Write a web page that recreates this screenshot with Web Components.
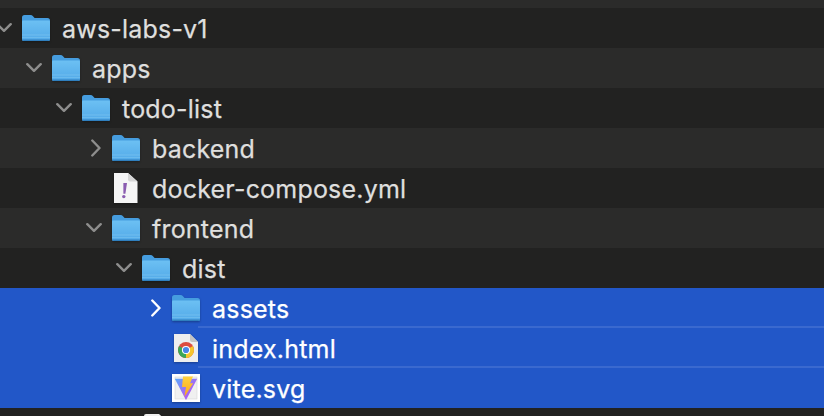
<!DOCTYPE html>
<html>
<head>
<meta charset="utf-8">
<title>Finder list</title>
<style>
  html, body { margin: 0; padding: 0; height: 416px; overflow: hidden; background: #222221; }
</style>
</head>
<body>
<file-list></file-list>

<script>
const ICONS = {
  folder: `<svg width="28" height="26" viewBox="0 0 28 26">
    <defs>
      <linearGradient id="f" x1="0" y1="0" x2="0" y2="1">
        <stop offset="0" stop-color="#6cc0f3"/><stop offset="1" stop-color="#52a9e8"/>
      </linearGradient>
    </defs>
    <path d="M0 2.5Q0 0 2.5 0H8.5Q10 0 11 1.2L12.6 3H25.5Q28 3 28 5.5V24Q28 26 26 26H2Q0 26 0 24Z" fill="#469ddf"/>
    <path d="M0 6.6Q0 5.6 1 5.6H27Q28 5.6 28 6.6V24Q28 26 26 26H2Q0 26 0 24Z" fill="url(#f)"/>
    <rect x="0" y="19.5" width="28" height="1" fill="#8accf3" opacity=".5"/>
    <rect x="0" y="22" width="28" height="1" fill="#8accf3" opacity=".4"/>
    <path d="M0 24.6H28Q28 26 26 26H2Q0 26 0 24.6Z" fill="#2f7fbe"/>
  </svg>`,
  yml: `<svg width="24" height="30" viewBox="0 0 24 30">
    <path d="M0 0H14L23.5 8.5V30H0Z" fill="#f5f5f5"/>
    <path d="M14 0L23.5 8.5H16Q14 8.5 14 6.5Z" fill="#d6d6d6"/>
    <path d="M9.4 10H13L11.4 20.8H9.4Z" fill="#8a5cb0"/>
    <circle cx="9.8" cy="23.6" r="1.7" fill="#8a5cb0"/>
  </svg>`,
  html: `<svg width="24" height="28" viewBox="0 0 24 28">
    <path d="M0 0H16L24 8V28H0Z" fill="#eeeeee"/>
    <path d="M16 0L24 8H18Q16 8 16 6Z" fill="#c4c4c4"/>
    <circle cx="12" cy="16" r="8" fill="#dd4b3e"/>
    <path d="M12 16L18.9 12A8 8 0 0 1 12 24Z" fill="#f6c52c"/>
    <path d="M12 16L12 24A8 8 0 0 1 5.1 12Z" fill="#3aa757"/>
    <circle cx="12" cy="16" r="4.1" fill="#fff"/>
    <circle cx="12" cy="16" r="3.1" fill="#4a86e8"/>
  </svg>`,
  vite: `<svg width="28" height="28" viewBox="0 0 28 28">
    <defs>
      <linearGradient id="v" x1="0" y1="0" x2="1" y2="1">
        <stop offset="0" stop-color="#5aa9fb"/><stop offset=".55" stop-color="#a26bf5"/><stop offset="1" stop-color="#b44ff0"/>
      </linearGradient>
      <linearGradient id="b" x1="0" y1="0" x2="0" y2="1">
        <stop offset="0" stop-color="#ffd23e"/><stop offset="1" stop-color="#fba51e"/>
      </linearGradient>
    </defs>
    <rect width="28" height="28" fill="#ffffff"/>
    <rect x="3" y="3" width="22" height="22" fill="#f0f0f0" stroke="#d8d8d8" stroke-width=".6"/>
    <path d="M2.8 4.8H25.2L14.2 25.8Q14 26.1 13.8 25.8Z" fill="url(#v)"/>
    <path d="M11 2.4H21L18 9.2H21.2L12.4 23L14 13H10Z" fill="url(#b)"/>
  </svg>`,
  doc: `<svg width="24" height="28" viewBox="0 0 24 28">
    <path d="M0 2Q0 0 2 0H15L24 8V28H0Z" fill="#efefef"/>
  </svg>`
};

class FileIcon extends HTMLElement {
  connectedCallback() {
    const type = this.getAttribute("type") || "folder";
    this.attachShadow({ mode: "open" });
    this.shadowRoot.innerHTML = `
    <style>
      :host { display: flex; width: 28px; height: 32px; align-items: center; justify-content: center; flex: none; }
      svg { display: block; filter: drop-shadow(0 1px 1px rgba(0,0,0,.3)); }
    </style>
    ${ICONS[type]}
    `;
  }
}

class FileRow extends HTMLElement {
  connectedCallback() {
    const chevron = this.getAttribute("chevron");
    const depth = Number(this.getAttribute("depth") || 0);
    this.attachShadow({ mode: "open" });
    let chev = "";
    if (chevron === "down") chev = '<polyline points="1.3,5.2 8,11.8 14.7,5.2"/>';
    if (chevron === "right") chev = '<polyline points="6.3,1.5 13.5,9 6.3,16.5"/>';
    this.shadowRoot.innerHTML = `
    <style>
      :host {
        display: flex;
        flex: none;
        height: 40px;
        align-items: center;
        position: relative;
        box-sizing: border-box;
        padding-left: ${depth * 30}px;
        background: #222221;
        overflow: hidden;
      }
      :host([stripe]) { background: #2b2b2a; }
      :host([selected]) { background: #2257c8; }
      :host([line])::after {
        content: "";
        position: absolute;
        left: 198px;
        right: 0;
        bottom: 0;
        height: 2px;
        background: #3a69cf;
      }
      .chev { margin-left: -4px; flex: none; width: 16px; height: 18px; }
      .chev polyline { fill: none; stroke: #8e8e8d; stroke-width: 2.4; stroke-linecap: round; stroke-linejoin: round; }
      :host([selected]) .chev polyline { stroke: #fff; }
      .icon { margin-left: 10px; flex: none; display: flex; }
      .name {
        margin-left: 12px;
        padding-top: 1px;
        font: 25px Inter, "Liberation Sans", sans-serif;
        letter-spacing: .2px;
        -webkit-text-stroke: .25px currentColor;
        color: #dfdfde;
        white-space: nowrap;
      }
      :host([selected]) .name { color: #fff; }
    </style>
    <svg class="chev" viewBox="0 0 16 18">${chev}</svg>
    <span class="icon"><slot name="icon"></slot></span>
    <span class="name"><slot></slot></span>
    `;
  }
}

class FileList extends HTMLElement {
  constructor() {
    super();
    this.attachShadow({ mode: "open" });
    this.shadowRoot.innerHTML = `
    <style>
      :host { display: flex; flex-direction: column; height: 416px; overflow: hidden; }
      .top { height: 8px; flex: none; background: #2b2b2a; }
    </style>
    <div class="top"></div>
    <slot></slot>
    `;
  }
}

customElements.define("file-icon", FileIcon);
customElements.define("file-row", FileRow);
customElements.define("file-list", FileList);

const rows = [
  [0, "down", "folder", "aws-labs-v1", ""],
  [1, "down", "folder", "apps", "stripe"],
  [2, "down", "folder", "todo-list", ""],
  [3, "right", "folder", "backend", "stripe"],
  [3, "", "yml", "docker-compose.yml", ""],
  [3, "down", "folder", "frontend", "stripe"],
  [4, "down", "folder", "dist", ""],
  [5, "right", "folder", "assets", "selected line"],
  [5, "", "html", "index.html", "selected line"],
  [5, "", "vite", "vite.svg", "selected"],
  [4, "", "doc", "", ""]
];
const list = document.querySelector("file-list");
rows.forEach(([depth, chevron, icon, name, flags]) => {
  const row = document.createElement("file-row");
  row.setAttribute("depth", depth);
  row.setAttribute("chevron", chevron);
  flags.split(" ").filter(Boolean).forEach(f => row.setAttribute(f, ""));
  row.innerHTML = `<file-icon slot="icon" type="${icon}"></file-icon>${name}`;
  list.appendChild(row);
});
</script>
</body>
</html>
